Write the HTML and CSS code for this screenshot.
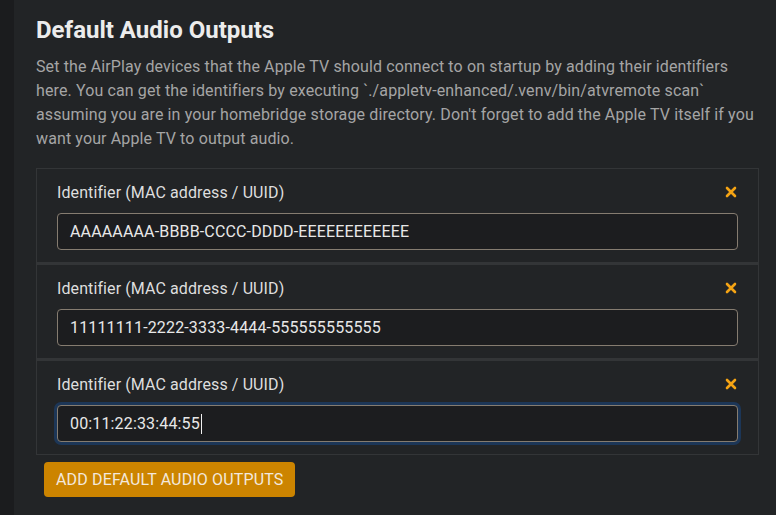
FILE: index.html
```html
<!DOCTYPE html>
<html>
<head>
<meta charset="utf-8">
<link rel="stylesheet" href="styles.css">
</head>
<body>
<div class="layout">
  <aside class="sidebar"></aside>
  <main class="main">
    <h2 class="title">Default Audio Outputs</h2>
    <p class="desc">Set the AirPlay devices that the Apple TV should connect to on startup by adding their identifiers here. You can get the identifiers by executing `./appletv-enhanced/.venv/bin/atvremote scan` assuming you are in your homebridge storage directory. Don't forget to add the Apple TV itself if you want your Apple TV to output audio.</p>
    <div class="panel">
      <div class="item">
        <div class="row">
          <label class="label">Identifier (MAC address / UUID)</label>
          <svg class="remove" viewBox="0 0 12 12" width="12" height="12"><path d="M2 2 L10 10 M10 2 L2 10" stroke="#f5a414" stroke-width="2.6" stroke-linecap="round"/></svg>
        </div>
        <div class="field">AAAAAAAA-BBBB-CCCC-DDDD-EEEEEEEEEEEE</div>
      </div>
      <div class="item">
        <div class="row">
          <label class="label">Identifier (MAC address / UUID)</label>
          <svg class="remove" viewBox="0 0 12 12" width="12" height="12"><path d="M2 2 L10 10 M10 2 L2 10" stroke="#f5a414" stroke-width="2.6" stroke-linecap="round"/></svg>
        </div>
        <div class="field">11111111-2222-3333-4444-555555555555</div>
      </div>
      <div class="item">
        <div class="row">
          <label class="label">Identifier (MAC address / UUID)</label>
          <svg class="remove" viewBox="0 0 12 12" width="12" height="12"><path d="M2 2 L10 10 M10 2 L2 10" stroke="#f5a414" stroke-width="2.6" stroke-linecap="round"/></svg>
        </div>
        <div class="field focused">00:11:22:33:44:55<span class="caret"></span></div>
      </div>
    </div>
    <button class="add">ADD DEFAULT AUDIO OUTPUTS</button>
  </main>
</div>
</body>
</html>
```
FILE: styles.css
```css
html, body {
  margin: 0;
  padding: 0;
  height: 100%;
  background: #222426;
  font-family: Roboto, "Liberation Sans", sans-serif;
}
.layout {
  display: flex;
  min-height: 100%;
}
.sidebar {
  width: 14px;
  flex: none;
  background: #1b1c1e;
}
.main {
  flex: 1;
  padding: 15px 17px 0 22px;
}
.title {
  margin: 0;
  font-size: 24px;
  line-height: 30px;
  font-weight: 700;
  color: #ececec;
}
.desc {
  margin: 10px 0 17px;
  font-size: 16px;
  line-height: 24px;
  letter-spacing: 0.12px;
  color: #a5a5a5;
}
.panel {
  display: flex;
  flex-direction: column;
}
.item {
  border: 1px solid #333537;
  padding: 11px 20px 12px;
}
.item + .item {
  border-top-width: 2px;
}
.row {
  display: flex;
  justify-content: space-between;
  align-items: center;
  height: 24px;
  margin-bottom: 9px;
}
.label {
  font-size: 16px;
  letter-spacing: 0.1px;
  color: #dedede;
}
.remove {
  margin-right: 1px;
}
.field {
  height: 35px;
  border: 1px solid #857c70;
  border-radius: 4px;
  background: #1c1d1f;
  color: #e8e8e8;
  font-size: 16px;
  letter-spacing: 0.15px;
  line-height: 35px;
  padding: 0 12px;
  display: flex;
  align-items: center;
}
.field.focused {
  box-shadow: 0 0 0 3px #1c3657;
}
.caret {
  display: inline-block;
  width: 1px;
  height: 20px;
  background: #f0f0f0;
  margin-left: 1px;
}
.add {
  margin: 7px 0 0 8px;
  height: 35px;
  padding: 0 12px;
  border: none;
  border-radius: 4px;
  background: #cc8400;
  color: #f3e8dc;
  font-family: Roboto, "Liberation Sans", sans-serif;
  font-size: 16px;
  letter-spacing: 0.15px;
}
```
